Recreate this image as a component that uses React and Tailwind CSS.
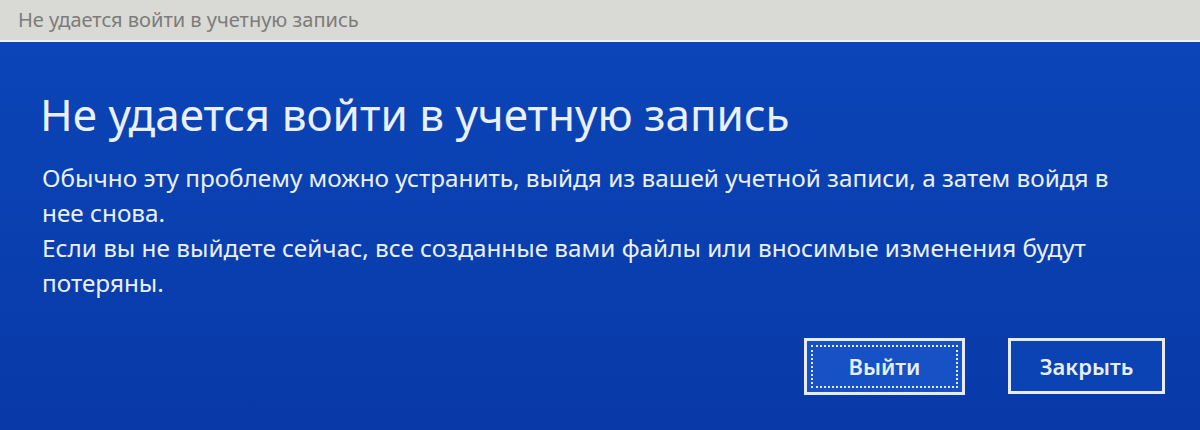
export default function App() {
  return (
    <div
      className="w-[1200px] h-[430px] flex flex-col overflow-hidden"
      style={{ fontFamily: '"Noto Sans", "Open Sans", sans-serif' }}
    >
      {/* title bar */}
      <div className="h-[42px] shrink-0 bg-[#d9d9d5] border-b-2 border-[#eef0f2] flex items-center pl-[18px]">
        <span className="text-[20px] text-[#7c7c7a]">Не удается войти в учетную запись</span>
      </div>

      {/* dialog body */}
      <div className="flex-1 bg-gradient-to-b from-[#0b45b7] to-[#0939a8] text-[#eaf0fa] pl-[40px] pr-[35px] pt-[44px]">
        <h1 className="text-[44px] leading-[56px] font-normal">
          Не удается войти в учетную запись
        </h1>
        <div className="mt-[18px] text-[24.3px] leading-[35px] w-[1085px] pl-[2px]">
          <p>Обычно эту проблему можно устранить, выйдя из вашей учетной записи, а затем войдя в нее снова.</p>
          <p>Если вы не выйдете сейчас, все созданные вами файлы или вносимые изменения будут потеряны.</p>
        </div>
        <div className="flex justify-end gap-[43px] mt-[38px]">
          <button className="w-[161px] h-[57px] border-[3px] border-[#e6ebf5] bg-[#1652c6] p-[4px]">
            <div className="w-full h-full border-2 border-dotted border-[#e6ebf5] flex items-center justify-center text-[22px] font-semibold text-[#e8eef8]">
              Выйти
            </div>
          </button>
          <button className="w-[157px] h-[56px] border-[3px] border-[#e6ebf5] bg-[#0b43b4] flex items-center justify-center text-[22px] font-semibold text-[#e8eef8]">
            Закрыть
          </button>
        </div>
      </div>
    </div>
  );
}
